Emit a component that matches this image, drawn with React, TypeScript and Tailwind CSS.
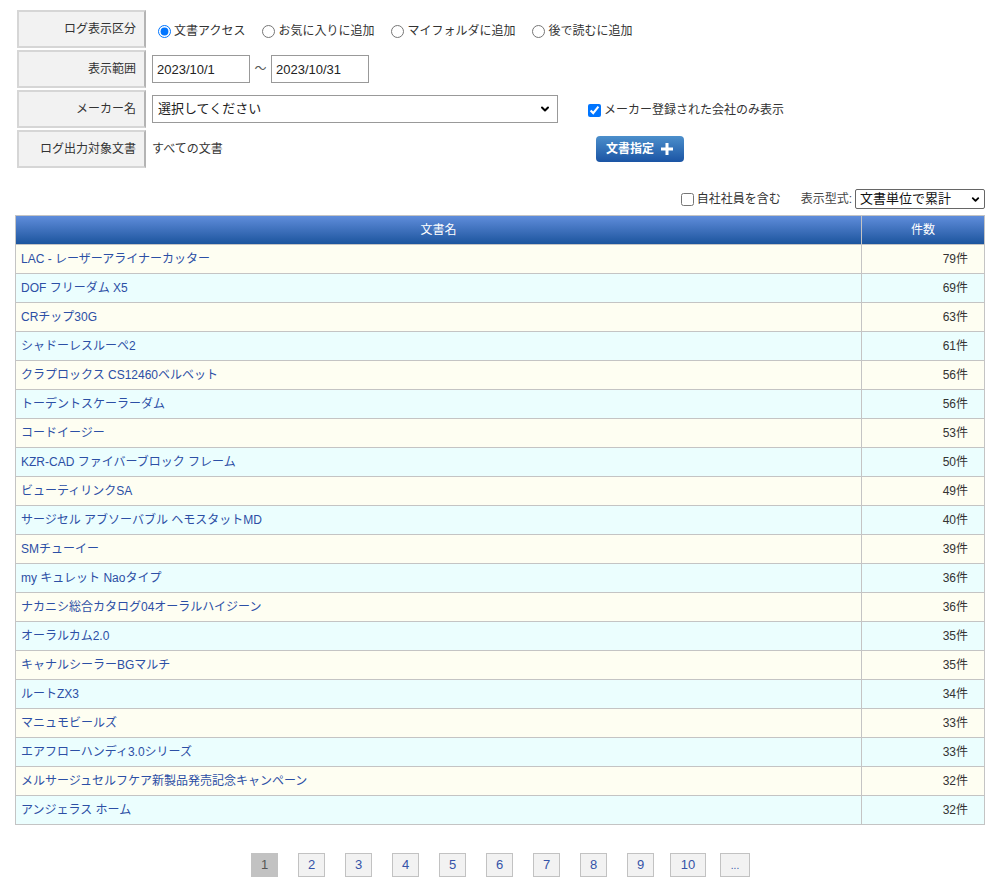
import { ChevronDown } from "lucide-react"

const rows = [
  { name: "LAC - レーザーアライナーカッター", count: 79 },
  { name: "DOF フリーダム X5", count: 69 },
  { name: "CRチップ30G", count: 63 },
  { name: "シャドーレスルーペ2", count: 61 },
  { name: "クラプロックス CS12460ベルベット", count: 56 },
  { name: "トーデントスケーラーダム", count: 56 },
  { name: "コードイージー", count: 53 },
  { name: "KZR-CAD ファイバーブロック フレーム", count: 50 },
  { name: "ビューティリンクSA", count: 49 },
  { name: "サージセル アブソーバブル ヘモスタットMD", count: 40 },
  { name: "SMチューイー", count: 39 },
  { name: "my キュレット Naoタイプ", count: 36 },
  { name: "ナカニシ総合カタログ04オーラルハイジーン", count: 36 },
  { name: "オーラルカム2.0", count: 35 },
  { name: "キャナルシーラーBGマルチ", count: 35 },
  { name: "ルートZX3", count: 34 },
  { name: "マニュモビールズ", count: 33 },
  { name: "エアフローハンディ3.0シリーズ", count: 33 },
  { name: "メルサージュセルフケア新製品発売記念キャンペーン", count: 32 },
  { name: "アンジェラス ホーム", count: 32 },
]

const idle = "bg-[#f2f2f2] text-[#3553a8] text-[13px]"

const pages = [
  { label: "1", cls: "w-[27px] bg-[#c2c2c2] text-[#555] text-[13px]" },
  { label: "2", cls: `ml-[20px] w-[27px] ${idle}` },
  { label: "3", cls: `ml-[20px] w-[27px] ${idle}` },
  { label: "4", cls: `ml-[20px] w-[27px] ${idle}` },
  { label: "5", cls: `ml-[20px] w-[27px] ${idle}` },
  { label: "6", cls: `ml-[20px] w-[27px] ${idle}` },
  { label: "7", cls: `ml-[20px] w-[27px] ${idle}` },
  { label: "8", cls: `ml-[20px] w-[27px] ${idle}` },
  { label: "9", cls: `ml-[20px] w-[27px] ${idle}` },
  { label: "10", cls: `ml-[16px] w-[36px] ${idle}` },
  { label: "...", cls: "ml-[14px] w-[30px] bg-[#f2f2f2] text-[#3553a8] text-[10px]" },
]

function Label({ text }: { text: string }) {
  return (
    <div className="w-[129px] h-[38px] shrink-0 flex items-center justify-end pr-[8px] bg-[#f2f2f2] border-2 border-[#d6d6d6] border-r-[#b4b4b4] text-[12px] text-[#333]">
      {text}
    </div>
  )
}

function Radio({ label, checked }: { label: string; checked?: boolean }) {
  return (
    <label className="flex items-center gap-[3px] mr-[17px]">
      <input type="radio" name="logtype" defaultChecked={checked} className="w-[13px] h-[13px] m-0" />
      <span>{label}</span>
    </label>
  )
}

export default function App() {
  return (
    <div
      className="w-[996px] min-h-[888px] bg-white text-[12px] text-[#333]"
      style={{ fontFamily: '"Liberation Sans", "Noto Sans CJK JP", sans-serif' }}
    >
      <div className="pt-[10px] pl-[17px] flex flex-col gap-[2px]">
        <div className="flex items-center">
          <Label text="ログ表示区分" />
          <div className="flex items-center pl-[12px] pt-[4px]">
            <Radio label="文書アクセス" checked />
            <Radio label="お気に入りに追加" />
            <Radio label="マイフォルダに追加" />
            <Radio label="後で読むに追加" />
          </div>
        </div>
        <div className="flex items-center">
          <Label text="表示範囲" />
          <div className="flex items-center pl-[6px]">
            <input
              defaultValue="2023/10/1"
              className="w-[98px] h-[28px] border border-[#999] px-[4px] text-[13px] text-[#222] outline-none"
            />
            <span className="w-[21px] text-center text-[#555]">〜</span>
            <input
              defaultValue="2023/10/31"
              className="w-[98px] h-[28px] border border-[#999] px-[4px] text-[13px] text-[#222] outline-none"
            />
          </div>
        </div>
        <div className="flex items-center">
          <Label text="メーカー名" />
          <div className="flex items-center pl-[6px]">
            <div className="relative w-[406px] h-[28px]">
              <select className="appearance-none w-full h-full border border-[#999] bg-white pl-[5px] text-[13px] text-[#222] outline-none">
                <option>選択してください</option>
              </select>
              <ChevronDown className="absolute right-[7px] top-[8px] w-[12px] h-[12px] text-black pointer-events-none" strokeWidth={4} />
            </div>
            <label className="flex items-center gap-[3px] ml-[30px] pt-[2px]">
              <input type="checkbox" defaultChecked className="w-[13px] h-[13px] m-0" />
              <span>メーカー登録された会社のみ表示</span>
            </label>
          </div>
        </div>
        <div className="flex items-center">
          <Label text="ログ出力対象文書" />
          <div className="flex items-center pl-[6px]">
            <span className="w-[444px]">すべての文書</span>
            <button className="flex items-center gap-[6px] h-[26px] w-[88px] justify-center rounded-[4px] bg-gradient-to-b from-[#4c8fcb] to-[#1b54a4] text-white font-bold text-[12px]">
              文書指定
              <svg width="14" height="14" viewBox="0 0 14 14">
                <path d="M7 1v12M1 7h12" stroke="white" strokeWidth="3" />
              </svg>
            </button>
          </div>
        </div>
      </div>

      <div className="flex items-center justify-end pr-[11px] mt-[21px] h-[20px]">
        <label className="flex items-center gap-[3px] mr-[20px]">
          <input type="checkbox" className="w-[13px] h-[13px] m-0" />
          <span>自社社員を含む</span>
        </label>
        <span className="text-[#444]">表示型式:</span>
        <div className="relative ml-[3px] w-[130px] h-[20px]">
          <select className="appearance-none w-full h-full border border-[#666] rounded-[2px] bg-white pl-[4px] text-[13px] leading-[18px] text-[#111] outline-none">
            <option>文書単位で累計</option>
          </select>
          <ChevronDown className="absolute right-[4px] top-[5px] w-[11px] h-[11px] text-black pointer-events-none" strokeWidth={4} />
        </div>
      </div>

      <div className="ml-[15px] mr-[11px] mt-[6px] border border-[#c4c4c4]">
        <div className="flex h-[28px] bg-gradient-to-b from-[#5f8ddb] to-[#1b559e] text-white text-[12px]">
          <div className="flex-1 flex items-center justify-center border-r border-[#c4c4c4]">文書名</div>
          <div className="w-[122px] flex items-center justify-center">件数</div>
        </div>
        {rows.map((r, i) => (
          <div
            key={r.name + i}
            className={`flex h-[29px] border-t border-[#c4c4c4] ${i % 2 === 0 ? "bg-[#fefef2]" : "bg-[#ebfefe]"}`}
          >
            <div className="flex-1 flex items-center pl-[5px] border-r border-[#c4c4c4]">
              <a href="#" className="text-[#2c4fa5]">{r.name}</a>
            </div>
            <div className="w-[122px] flex items-center justify-end pr-[16px] text-[#333]">{r.count}件</div>
          </div>
        ))}
      </div>

      <div className="flex justify-center mt-[28px] pl-[5px]">
        {pages.map((p) => (
          <div
            key={p.label}
            className={`h-[24px] flex items-center justify-center border border-[#c2c2c2] ${p.cls}`}
          >
            {p.label}
          </div>
        ))}
      </div>
    </div>
  )
}
